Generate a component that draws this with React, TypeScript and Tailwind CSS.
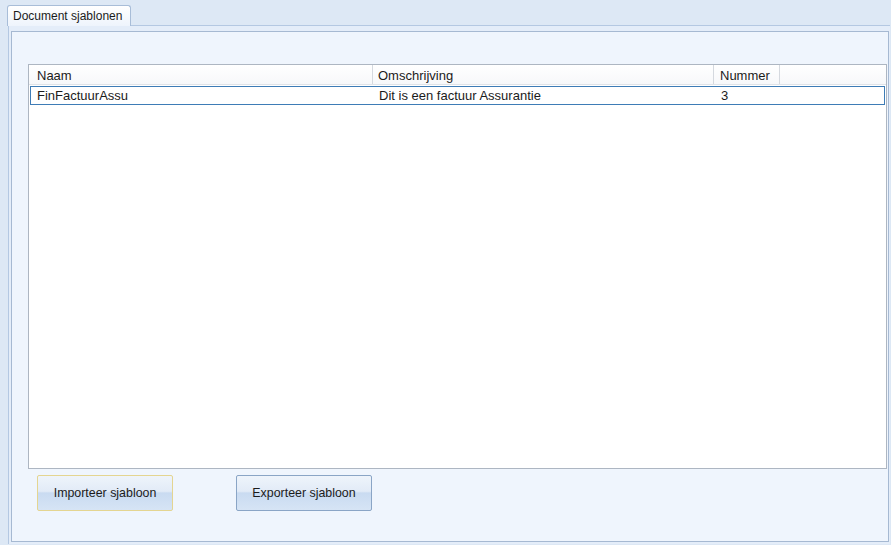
import React from "react";

export default function App() {
  const font = { fontFamily: '"Liberation Sans", Arial, sans-serif' };
  return (
    <div
      className="w-[891px] h-[545px] bg-[#dde8f5] flex flex-col overflow-hidden text-[12px] text-[#1b1b1b]"
      style={font}
    >
      {/* tab strip */}
      <div className="h-[25px] flex items-end pl-[7px] pt-[5px]">
        <div className="h-[21px] w-[124px] rounded-t-[3px] border border-b-0 border-[#a8bdd8] bg-gradient-to-b from-[#ffffff] to-[#eef4fc] px-[5px] pt-[2px] leading-[16px] relative top-[1px]">
          Document sjablonen
        </div>
      </div>
      {/* panel */}
      <div className="flex-1 ml-[8px] mr-[1px] mb-[1px] border-t border-l border-[#b4c8e2] bg-[#e4edf9] pl-[2px] pt-[5px] pr-[1px] pb-[2px] flex">
        <div className="flex-1 border border-[#a6b9d2] bg-[#eff5fd] flex flex-col pl-[16px] pr-[1px] pt-[32px]">
          {/* list view */}
          <div className="h-[405px] w-[859px] border border-[#adb6c2] bg-white flex flex-col text-[13px]">
            <div className="h-[20px] flex border-b border-[#dfe3e8] bg-gradient-to-b from-[#ffffff] to-[#f7f8fa]">
              <div className="w-[344px] border-r border-[#d5d9df] pl-[8px] pt-[1px] leading-[19px]">Naam</div>
              <div className="w-[341px] border-r border-[#d5d9df] pl-[5px] pt-[1px] leading-[19px]">Omschrijving</div>
              <div className="w-[66px] border-r border-[#d5d9df] pl-[6px] pt-[1px] leading-[19px]">Nummer</div>
            </div>
            <div className="mt-[1px] ml-[1px] h-[19px] w-[855px] border border-[#3e7cb6] flex leading-[17px]">
              <div className="w-[343px] pl-[6px]">FinFactuurAssu</div>
              <div className="w-[341px] pl-[5px]">Dit is een factuur Assurantie</div>
              <div className="pl-[6px]">3</div>
            </div>
          </div>
          {/* buttons */}
          <div className="flex mt-[6px] pl-[9px] gap-[63px]">
            <button className="w-[136px] h-[36px] rounded-[2px] border border-[#e4d591] bg-[linear-gradient(to_bottom,#eef4fb_0%,#e2ebf7_45%,#c9dbf1_50%,#d6e4f5_100%)] text-[12.4px] text-[#1b1b1b]" style={font}>
              Importeer sjabloon
            </button>
            <button className="w-[136px] h-[36px] rounded-[2px] border border-[#8aa5c6] bg-[linear-gradient(to_bottom,#eef4fb_0%,#e2ebf7_45%,#c9dbf1_50%,#d6e4f5_100%)] text-[12.4px] text-[#1b1b1b]" style={font}>
              Exporteer sjabloon
            </button>
          </div>
        </div>
      </div>
    </div>
  );
}
